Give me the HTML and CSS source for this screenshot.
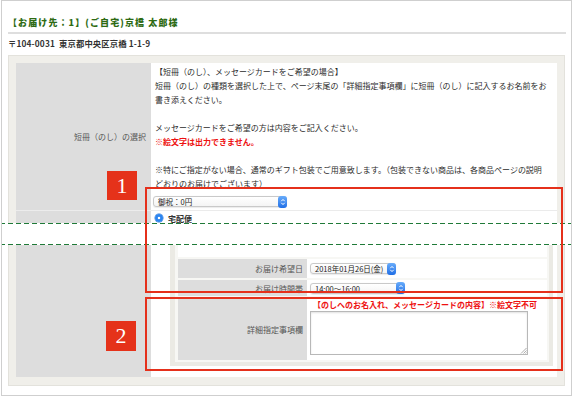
FILE: index.html
```html
<!DOCTYPE html>
<html lang="ja">
<head>
<meta charset="utf-8">
<title>お届け先</title>
<link rel="stylesheet" href="styles.css">
</head>
<body>
<div class="page">
  <h1 class="dest">【お届け先：1】(ご自宅)京橋 太郎様</h1>
  <p class="addr">〒104-0031&nbsp; 東京都中央区京橋 1-1-9</p>
  <div class="frame">
    <div class="table">
      <div class="th first">短冊（のし）の選択</div>
      <div class="td first">
        <p class="note">【短冊（のし）、メッセージカードをご希望の場合】<br>短冊（のし）の種類を選択した上で、ページ末尾の「詳細指定事項欄」に短冊（のし）に記入するお名前をお<br>書き添えください。<br><br>メッセージカードをご希望の方は内容をご記入ください。<br><strong class="warn">※絵文字は出力できません。</strong><br><br>※特にご指定がない場合、通常のギフト包装でご用意致します。（包装できない商品は、各商品ページの説明<br>どおりのお届けでございます）</p>
        <div class="select s1"><span class="val">御祝：0円</span><span class="step"><svg viewBox="0 0 8 12" width="8" height="12"><path d="M2.3 5.2 L4 3.4 L5.7 5.2 M2.3 6.8 L4 8.6 L5.7 6.8" fill="none" stroke="#fff" stroke-width="1"/></svg></span></div>
      </div>
      <div class="th second"></div>
      <div class="td second">
        <div class="radio-line"><span class="radio"></span><span>宅配便</span></div>
        <div class="sub">
          <div class="spacer"></div>
          <div class="sth">お届け希望日</div>
          <div class="std"><div class="select s2"><span class="val">2018年01月26日(金)</span><span class="step"><svg viewBox="0 0 8 12" width="8" height="12"><path d="M2.3 5.2 L4 3.4 L5.7 5.2 M2.3 6.8 L4 8.6 L5.7 6.8" fill="none" stroke="#fff" stroke-width="1"/></svg></span></div></div>
          <div class="sth">お届け時間帯</div>
          <div class="std"><div class="select s3"><span class="val">14:00〜16:00</span><span class="step"><svg viewBox="0 0 8 12" width="8" height="12"><path d="M2.3 5.2 L4 3.4 L5.7 5.2 M2.3 6.8 L4 8.6 L5.7 6.8" fill="none" stroke="#fff" stroke-width="1"/></svg></span></div></div>
          <div class="sth tall">詳細指定事項欄</div>
          <div class="std tall">
            <p class="req">【のしへのお名入れ、メッセージカードの内容】※絵文字不可</p>
            <div class="textarea"><svg class="grip" viewBox="0 0 7 7" width="7" height="7"><path d="M6.5 1 L1 6.5 M6.5 3.5 L3.5 6.5 M6.5 5.5 L5.5 6.5" stroke="#9a9a9a" stroke-width="0.8"/></svg></div>
          </div>
        </div>
      </div>
    </div>
  </div>
  <div class="cut"></div>
  <div class="mark-box box1"></div>
  <div class="mark-box box2"></div>
  <div class="mark-num num1">1</div>
  <div class="mark-num num2">2</div>
</div>
</body>
</html>
```

FILE: styles.css
```css
* { box-sizing: border-box; }
html, body { margin: 0; padding: 0; background: #fff; }
body {
  font-family: "Noto Sans CJK JP", "Noto Sans", sans-serif;
  font-size: 8px;
  color: #333;
}
.page {
  position: relative;
  margin-left: 1px;
  width: 571px;
  height: 396px;
  border: 1px solid #cfcfcf;
  padding: 0 5px 0 6px;
  overflow: hidden;
}
.dest {
  margin: 16px 0 0;
  padding: 0 0 3px;
  font-size: 9px;
  line-height: 12px;
  font-weight: 900;
  letter-spacing: 1.1px;
  color: #2e6b14;
  border-bottom: 2px solid #dedede;
  white-space: nowrap;
}
.addr {
  margin: 3px 0 0;
  line-height: 12px;
  font-size: 8.3px;
  font-weight: bold;
  letter-spacing: 0.15px;
  color: #333;
  white-space: nowrap;
}
.frame {
  margin-top: 6px;
  width: 557px;
  border: 1px solid #e3e2dc;
  background: #f0efea;
  padding: 7px;
  height: 331px;
}
.table {
  display: grid;
  grid-template-columns: 135px 1fr;
}
.th {
  background: #dddddd;
  color: #555;
  text-align: right;
  padding-right: 5px;
  display: flex;
  align-items: center;
  justify-content: flex-end;
  white-space: nowrap;
}
.td { background: #fff; }
.td.first { padding: 2px 4px 3px 4px; }
.th.second { border-top: 1px solid #ececec; }
.td.second { border-top: 1px solid #ebebeb; padding: 0 4px 11px 4px; }
.note {
  margin: 0;
  line-height: 14px;
  white-space: nowrap;
  color: #2b2b2b;
}
.warn { color: #ee1111; font-weight: bold; }

.select {
  display: flex;
  align-items: center;
  height: 11px;
  border: 1px solid #c9c9c9;
  border-radius: 3px;
  background: linear-gradient(#ffffff, #f4f4f4);
  box-shadow: 0 0.5px 1px rgba(0,0,0,0.08);
  font-size: 7.5px;
  color: #222;
  padding-left: 4px;
  white-space: nowrap;
}
.select .val { flex: 1; line-height: 9px; }
.select .step {
  display: block;
  width: 9px;
  height: 12px;
  margin: -1px -1px -1px 0;
  border-radius: 3px;
  background: linear-gradient(#68acfb, #1f6ee6);
}
.select .step svg { display: block; margin-left: 0.5px; }
.s1 { width: 134px; margin: 5px 0 0 -2px; }
.s2 { width: 86px; }
.s3 { width: 95px; }

.radio-line {
  display: flex;
  align-items: center;
  height: 14px;
  font-weight: bold;
  color: #333;
  gap: 5px;
  padding-left: 0;
}
.radio {
  width: 8px;
  height: 8px;
  border-radius: 50%;
  background: radial-gradient(circle, #fff 0 1.4px, #2d85ef 1.6px);
  box-shadow: 0 0 0 0.5px #2a76d6;
}

.sub {
  margin-left: 15px;
  display: grid;
  grid-template-columns: 129px 1fr;
  row-gap: 2px;
  background: #f7f7f4;
  border-left: 5px solid #ebeae4;
  border-right: 4px solid #ebeae4;
  border-bottom: 4px solid #ebeae4;
  padding: 0 2px 2px 3px;
}
.spacer { grid-column: 1 / -1; height: 32px; background: #fff; }
.sth {
  background: #dddddd;
  color: #555;
  display: flex;
  align-items: center;
  justify-content: flex-end;
  padding-right: 4px;
  height: 19px;
}
.sth:nth-of-type(4) { height: 16px; }
.std {
  background: #fff;
  display: flex;
  align-items: center;
  padding-left: 3px;
  height: 19px;
}
.std:nth-of-type(5) { height: 16px; }
.sth.tall { height: 62px; }
.std.tall {
  height: 62px;
  display: block;
  padding: 1px 0 0 3px;
}
.req {
  margin: 0 0 0 3px;
  line-height: 12px;
  color: #ee1111;
  font-weight: bold;
  white-space: nowrap;
}
.textarea {
  position: relative;
  width: 218px;
  height: 44px;
  border: 1px solid #b8b8b8;
  box-shadow: inset 0 1px 2px rgba(0,0,0,0.12);
  background: #fff;
}
.grip { position: absolute; right: 0; bottom: 0; }

.cut {
  position: absolute;
  left: -2px;
  top: 222px;
  width: 574px;
  height: 22px;
  background-color: #fff;
  background-image:
    repeating-linear-gradient(to right, #1f7a38 0 5px, transparent 5px 8px),
    repeating-linear-gradient(to right, #1f7a38 0 5px, transparent 5px 8px);
  background-size: 100% 1px, 100% 1px;
  background-position: 0 0, 0 100%;
  background-repeat: no-repeat;
}
.mark-box {
  position: absolute;
  left: 143px;
  width: 418px;
  border: 2px solid #e5301b;
}
.box1 { top: 186px; height: 106px; }
.box2 { top: 296px; height: 74px; }
.mark-num {
  position: absolute;
  width: 30px;
  height: 29px;
  background: #e5321a;
  color: #fff;
  font-family: "Liberation Serif", "DejaVu Serif", serif;
  font-size: 22px;
  line-height: 29px;
  text-align: center;
}
.num1 { left: 105px; top: 170px; }
.num2 { left: 104px; top: 320px; height: 30px; line-height: 30px; }
```
